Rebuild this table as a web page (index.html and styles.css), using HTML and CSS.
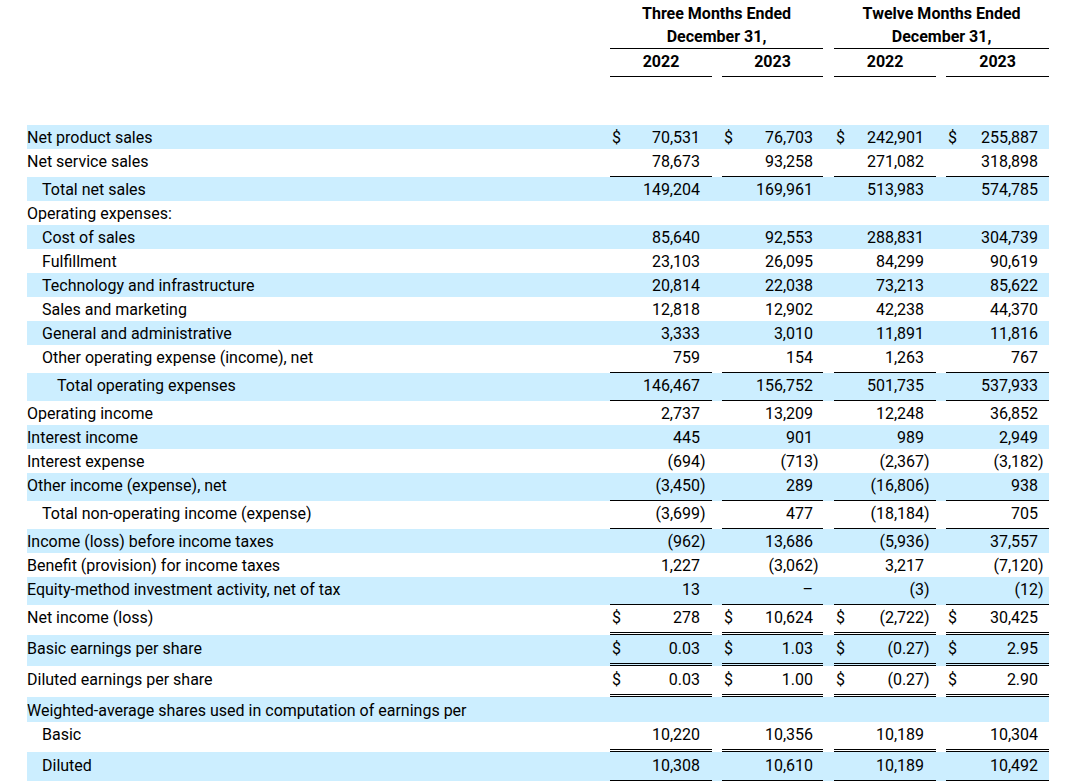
FILE: index.html
```html
<!DOCTYPE html>
<html lang="en">
<head>
<meta charset="utf-8">
<title>Consolidated Statements of Operations</title>
<link rel="stylesheet" href="styles.css">
</head>
<body>
<div class="page">
<table class="fin">
  <colgroup>
    <col class="c-label">
    <col class="c-d"><col class="c-n1"><col class="c-p1">
    <col class="c-gap">
    <col class="c-d"><col class="c-n2"><col class="c-p2">
    <col class="c-gap2">
    <col class="c-d"><col class="c-n1"><col class="c-p1">
    <col class="c-gap">
    <col class="c-d"><col class="c-n4"><col class="c-p4">
  </colgroup>
  <thead>
    <tr class="h1">
      <th></th>
      <th colspan="7">Three Months Ended</th>
      <th></th>
      <th colspan="7">Twelve Months Ended</th>
    </tr>
    <tr class="h2">
      <th></th>
      <th colspan="7" class="rule">December 31,</th>
      <th></th>
      <th colspan="7" class="rule">December 31,</th>
    </tr>
    <tr class="h3">
      <th></th>
      <th colspan="3" class="rule">2022</th><th></th>
      <th colspan="3" class="rule">2023</th><th></th>
      <th colspan="3" class="rule">2022</th><th></th>
      <th colspan="3" class="rule">2023</th>
    </tr>
    <tr class="spacer"><th colspan="16"></th></tr>
  </thead>
  <tbody>
    <tr class="blue">
      <td class="l">Net product sales</td>
      <td class="d">$</td><td class="n">70,531</td><td class="p"></td><td></td>
      <td class="d">$</td><td class="n">76,703</td><td class="p"></td><td></td>
      <td class="d">$</td><td class="n">242,901</td><td class="p"></td><td></td>
      <td class="d">$</td><td class="n">255,887</td><td class="p"></td>
    </tr>
    <tr class="u">
      <td class="l">Net service sales</td>
      <td class="d"></td><td class="n">78,673</td><td class="p"></td><td></td>
      <td class="d"></td><td class="n">93,258</td><td class="p"></td><td></td>
      <td class="d"></td><td class="n">271,082</td><td class="p"></td><td></td>
      <td class="d"></td><td class="n">318,898</td><td class="p"></td>
    </tr>
    <tr class="blue">
      <td class="l i1">Total net sales</td>
      <td class="d"></td><td class="n">149,204</td><td class="p"></td><td></td>
      <td class="d"></td><td class="n">169,961</td><td class="p"></td><td></td>
      <td class="d"></td><td class="n">513,983</td><td class="p"></td><td></td>
      <td class="d"></td><td class="n">574,785</td><td class="p"></td>
    </tr>
    <tr>
      <td class="l">Operating expenses:</td>
      <td class="d"></td><td class="n"></td><td class="p"></td><td></td>
      <td class="d"></td><td class="n"></td><td class="p"></td><td></td>
      <td class="d"></td><td class="n"></td><td class="p"></td><td></td>
      <td class="d"></td><td class="n"></td><td class="p"></td>
    </tr>
    <tr class="blue">
      <td class="l i1">Cost of sales</td>
      <td class="d"></td><td class="n">85,640</td><td class="p"></td><td></td>
      <td class="d"></td><td class="n">92,553</td><td class="p"></td><td></td>
      <td class="d"></td><td class="n">288,831</td><td class="p"></td><td></td>
      <td class="d"></td><td class="n">304,739</td><td class="p"></td>
    </tr>
    <tr>
      <td class="l i1">Fulfillment</td>
      <td class="d"></td><td class="n">23,103</td><td class="p"></td><td></td>
      <td class="d"></td><td class="n">26,095</td><td class="p"></td><td></td>
      <td class="d"></td><td class="n">84,299</td><td class="p"></td><td></td>
      <td class="d"></td><td class="n">90,619</td><td class="p"></td>
    </tr>
    <tr class="blue">
      <td class="l i1">Technology and infrastructure</td>
      <td class="d"></td><td class="n">20,814</td><td class="p"></td><td></td>
      <td class="d"></td><td class="n">22,038</td><td class="p"></td><td></td>
      <td class="d"></td><td class="n">73,213</td><td class="p"></td><td></td>
      <td class="d"></td><td class="n">85,622</td><td class="p"></td>
    </tr>
    <tr>
      <td class="l i1">Sales and marketing</td>
      <td class="d"></td><td class="n">12,818</td><td class="p"></td><td></td>
      <td class="d"></td><td class="n">12,902</td><td class="p"></td><td></td>
      <td class="d"></td><td class="n">42,238</td><td class="p"></td><td></td>
      <td class="d"></td><td class="n">44,370</td><td class="p"></td>
    </tr>
    <tr class="blue">
      <td class="l i1">General and administrative</td>
      <td class="d"></td><td class="n">3,333</td><td class="p"></td><td></td>
      <td class="d"></td><td class="n">3,010</td><td class="p"></td><td></td>
      <td class="d"></td><td class="n">11,891</td><td class="p"></td><td></td>
      <td class="d"></td><td class="n">11,816</td><td class="p"></td>
    </tr>
    <tr class="u">
      <td class="l i1">Other operating expense (income), net</td>
      <td class="d"></td><td class="n">759</td><td class="p"></td><td></td>
      <td class="d"></td><td class="n">154</td><td class="p"></td><td></td>
      <td class="d"></td><td class="n">1,263</td><td class="p"></td><td></td>
      <td class="d"></td><td class="n">767</td><td class="p"></td>
    </tr>
    <tr class="blue u">
      <td class="l i2">Total operating expenses</td>
      <td class="d"></td><td class="n">146,467</td><td class="p"></td><td></td>
      <td class="d"></td><td class="n">156,752</td><td class="p"></td><td></td>
      <td class="d"></td><td class="n">501,735</td><td class="p"></td><td></td>
      <td class="d"></td><td class="n">537,933</td><td class="p"></td>
    </tr>
    <tr>
      <td class="l">Operating income</td>
      <td class="d"></td><td class="n">2,737</td><td class="p"></td><td></td>
      <td class="d"></td><td class="n">13,209</td><td class="p"></td><td></td>
      <td class="d"></td><td class="n">12,248</td><td class="p"></td><td></td>
      <td class="d"></td><td class="n">36,852</td><td class="p"></td>
    </tr>
    <tr class="blue">
      <td class="l">Interest income</td>
      <td class="d"></td><td class="n">445</td><td class="p"></td><td></td>
      <td class="d"></td><td class="n">901</td><td class="p"></td><td></td>
      <td class="d"></td><td class="n">989</td><td class="p"></td><td></td>
      <td class="d"></td><td class="n">2,949</td><td class="p"></td>
    </tr>
    <tr>
      <td class="l">Interest expense</td>
      <td class="d"></td><td class="n">(694</td><td class="p">)</td><td></td>
      <td class="d"></td><td class="n">(713</td><td class="p">)</td><td></td>
      <td class="d"></td><td class="n">(2,367</td><td class="p">)</td><td></td>
      <td class="d"></td><td class="n">(3,182</td><td class="p">)</td>
    </tr>
    <tr class="blue u">
      <td class="l">Other income (expense), net</td>
      <td class="d"></td><td class="n">(3,450</td><td class="p">)</td><td></td>
      <td class="d"></td><td class="n">289</td><td class="p"></td><td></td>
      <td class="d"></td><td class="n">(16,806</td><td class="p">)</td><td></td>
      <td class="d"></td><td class="n">938</td><td class="p"></td>
    </tr>
    <tr class="u">
      <td class="l i1">Total non-operating income (expense)</td>
      <td class="d"></td><td class="n">(3,699</td><td class="p">)</td><td></td>
      <td class="d"></td><td class="n">477</td><td class="p"></td><td></td>
      <td class="d"></td><td class="n">(18,184</td><td class="p">)</td><td></td>
      <td class="d"></td><td class="n">705</td><td class="p"></td>
    </tr>
    <tr class="blue">
      <td class="l">Income (loss) before income taxes</td>
      <td class="d"></td><td class="n">(962</td><td class="p">)</td><td></td>
      <td class="d"></td><td class="n">13,686</td><td class="p"></td><td></td>
      <td class="d"></td><td class="n">(5,936</td><td class="p">)</td><td></td>
      <td class="d"></td><td class="n">37,557</td><td class="p"></td>
    </tr>
    <tr>
      <td class="l">Benefit (provision) for income taxes</td>
      <td class="d"></td><td class="n">1,227</td><td class="p"></td><td></td>
      <td class="d"></td><td class="n">(3,062</td><td class="p">)</td><td></td>
      <td class="d"></td><td class="n">3,217</td><td class="p"></td><td></td>
      <td class="d"></td><td class="n">(7,120</td><td class="p">)</td>
    </tr>
    <tr class="blue u">
      <td class="l">Equity-method investment activity, net of tax</td>
      <td class="d"></td><td class="n">13</td><td class="p"></td><td></td>
      <td class="d"></td><td class="n">–</td><td class="p"></td><td></td>
      <td class="d"></td><td class="n">(3</td><td class="p">)</td><td></td>
      <td class="d"></td><td class="n">(12</td><td class="p">)</td>
    </tr>
    <tr class="uu">
      <td class="l">Net income (loss)</td>
      <td class="d">$</td><td class="n">278</td><td class="p"></td><td></td>
      <td class="d">$</td><td class="n">10,624</td><td class="p"></td><td></td>
      <td class="d">$</td><td class="n">(2,722</td><td class="p">)</td><td></td>
      <td class="d">$</td><td class="n">30,425</td><td class="p"></td>
    </tr>
    <tr class="blue uu t1">
      <td class="l">Basic earnings per share</td>
      <td class="d">$</td><td class="n">0.03</td><td class="p"></td><td></td>
      <td class="d">$</td><td class="n">1.03</td><td class="p"></td><td></td>
      <td class="d">$</td><td class="n">(0.27</td><td class="p">)</td><td></td>
      <td class="d">$</td><td class="n">2.95</td><td class="p"></td>
    </tr>
    <tr class="uu t1">
      <td class="l">Diluted earnings per share</td>
      <td class="d">$</td><td class="n">0.03</td><td class="p"></td><td></td>
      <td class="d">$</td><td class="n">1.00</td><td class="p"></td><td></td>
      <td class="d">$</td><td class="n">(0.27</td><td class="p">)</td><td></td>
      <td class="d">$</td><td class="n">2.90</td><td class="p"></td>
    </tr>
    <tr class="blue t1">
      <td class="l">Weighted-average shares used in computation of earnings per</td>
      <td class="d"></td><td class="n"></td><td class="p"></td><td></td>
      <td class="d"></td><td class="n"></td><td class="p"></td><td></td>
      <td class="d"></td><td class="n"></td><td class="p"></td><td></td>
      <td class="d"></td><td class="n"></td><td class="p"></td>
    </tr>
    <tr class="uu">
      <td class="l i1">Basic</td>
      <td class="d"></td><td class="n">10,220</td><td class="p"></td><td></td>
      <td class="d"></td><td class="n">10,356</td><td class="p"></td><td></td>
      <td class="d"></td><td class="n">10,189</td><td class="p"></td><td></td>
      <td class="d"></td><td class="n">10,304</td><td class="p"></td>
    </tr>
    <tr class="blue u t1">
      <td class="l i1">Diluted</td>
      <td class="d"></td><td class="n">10,308</td><td class="p"></td><td></td>
      <td class="d"></td><td class="n">10,610</td><td class="p"></td><td></td>
      <td class="d"></td><td class="n">10,189</td><td class="p"></td><td></td>
      <td class="d"></td><td class="n">10,492</td><td class="p"></td>
    </tr>
  </tbody>
</table>
</div>
</body>
</html>
```
FILE: styles.css
```css
html, body {
  margin: 0;
  padding: 0;
  background: #ffffff;
}

body {
  font-family: Roboto, "Liberation Sans", Arial, sans-serif;
  font-size: 16px;
  color: #000000;
}

.page {
  padding-left: 27px;
}

.fin {
  border-collapse: separate;
  border-spacing: 0;
  table-layout: fixed;
  width: 1022px;
}

.c-label { width: 583px; }
.c-d { width: 12px; }
.c-n1 { width: 78px; }
.c-p1 { width: 12px; }
.c-n2 { width: 79px; }
.c-p2 { width: 10px; }
.c-n4 { width: 80px; }
.c-p4 { width: 11px; }
.c-gap { width: 10px; }
.c-gap2 { width: 11px; }

.fin th,
.fin td {
  padding: 2px 0 0 0;
  line-height: 22px;
  vertical-align: top;
  white-space: nowrap;
  overflow: visible;
}

.fin th {
  font-weight: 700;
  text-align: center;
}

.h1 th {
  padding-top: 3px;
  line-height: 22px;
}

.h2 th {
  padding-top: 1px;
  line-height: 22px;
}

.h3 th {
  padding-top: 1px;
  line-height: 23px;
  padding-bottom: 3px;
}

.fin th.rule {
  border-bottom: 1px solid #000;
}

.fin .spacer th {
  padding: 0;
  height: 48px;
  line-height: 0;
}

.blue td {
  background: #cceeff;
}

.l {
  text-align: left;
}

.i1 { padding-left: 15px !important; }
.i2 { padding-left: 30px !important; }

.d {
  text-align: left;
  padding-left: 2px !important;
}

.n {
  text-align: right;
}

.p {
  text-align: left;
}

.fin .t1 td {
  padding-top: 3px;
}

.fin .u td,
.fin .uu td {
  padding-bottom: 3px;
}

.u td.d,
.u td.n,
.u td.p {
  border-bottom: 1px solid #000;
}

.uu td.d,
.uu td.n,
.uu td.p {
  border-bottom: 3px double #000;
}
```
